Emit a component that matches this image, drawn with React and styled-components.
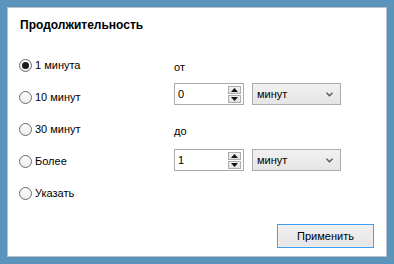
import React from "react";
import styled, { createGlobalStyle } from "styled-components";

const Global = createGlobalStyle`
  html, body { margin: 0; padding: 0; }
  body { width: 394px; height: 264px; overflow: hidden; background: #5b94bb; }
  #root { width: 394px; height: 264px; }
`;

const Frame = styled.div`
  box-sizing: border-box;
  width: 394px;
  height: 264px;
  background: #5b94bb;
  padding: 7px;
  font-family: Tahoma, "Liberation Sans", Arial, sans-serif;
  font-size: 11px;
  color: #000;
`;

const Panel = styled.div`
  box-sizing: border-box;
  height: 100%;
  background: #fff;
  border: 1px solid #b8c4cc;
  padding: 10px 12px 0 11px;
  display: flex;
  flex-direction: column;
`;

const Title = styled.div`
  font-weight: bold;
  font-size: 12px;
  height: 14px;
  line-height: 14px;
  margin-left: 1px;
`;

const Body = styled.div`
  display: flex;
  margin-top: 28px;
`;

const RadioCol = styled.div`
  display: flex;
  flex-direction: column;
  width: 155px;
`;

const RadioRow = styled.label`
  display: flex;
  align-items: center;
  height: 32px;
  margin-top: -11px;
  margin-bottom: 11px;
  gap: 3px;
`;

const RadioCircle = styled.span`
  box-sizing: border-box;
  width: 13px;
  height: 13px;
  border-radius: 50%;
  border: 1px solid #6a6a6a;
  background: linear-gradient(#fdfdfd, #ececec);
  display: flex;
  align-items: center;
  justify-content: center;
  &::after {
    content: "";
    width: 7px;
    height: 7px;
    border-radius: 50%;
    background: ${(p) => (p.$checked ? "#1a1a1a" : "transparent")};
  }
`;

const ControlsCol = styled.div`
  display: flex;
  flex-direction: column;
`;

const SmallLabel = styled.div`
  height: 14px;
  line-height: 14px;
  margin-top: ${(p) => p.$mt}px;
  margin-left: 0px;
`;

const ControlRow = styled.div`
  display: flex;
  gap: 8px;
  margin-top: ${(p) => p.$mt}px;
`;

const SpinBox = styled.div`
  box-sizing: border-box;
  width: 70px;
  height: 22px;
  border: 1px solid #ababab;
  display: flex;
  align-items: center;
  padding-left: 3px;
  justify-content: space-between;
`;

const SpinButtons = styled.div`
  display: flex;
  flex-direction: column;
  gap: 1px;
  margin-right: 2px;
`;

const SpinBtn = styled.div`
  box-sizing: border-box;
  width: 13px;
  height: 8px;
  border: 1px solid #acacac;
  background: linear-gradient(#f2f2f2, #e1e1e1);
  display: flex;
  align-items: center;
  justify-content: center;
`;

const Select = styled.div`
  box-sizing: border-box;
  width: 89px;
  height: 22px;
  border: 1px solid #acacac;
  background: linear-gradient(#f1f1f1, #e5e5e5);
  display: flex;
  align-items: center;
  justify-content: space-between;
  padding: 0 7px 0 4px;
`;

const Footer = styled.div`
  display: flex;
  justify-content: flex-end;
  margin-top: auto;
  padding-bottom: 8px;
`;

const Button = styled.button`
  box-sizing: border-box;
  width: 97px;
  height: 24px;
  border: 1px solid #3c9ef0;
  background: linear-gradient(#f0f0f0, #e5e5e5);
  font-family: inherit;
  font-size: 11px;
  color: #000;
  padding: 0;
  box-shadow: inset 0 0 0 1px #ffffff55;
`;

const Arrow = ({ up }) => (
  <svg width="7" height="4" viewBox="0 0 7 4">
    <path d={up ? "M0 4 L3.5 0 L7 4 Z" : "M0 0 L3.5 4 L7 0 Z"} fill="#111" />
  </svg>
);

const Chevron = () => (
  <svg width="7" height="5" viewBox="0 0 7 5">
    <path d="M0.5 0.8 L3.5 3.8 L6.5 0.8" stroke="#555" strokeWidth="1.4" fill="none" />
  </svg>
);

const Spin = ({ value }) => (
  <SpinBox>
    <span>{value}</span>
    <SpinButtons>
      <SpinBtn><Arrow up /></SpinBtn>
      <SpinBtn><Arrow /></SpinBtn>
    </SpinButtons>
  </SpinBox>
);

const Drop = () => (
  <Select>
    <span>минут</span>
    <Chevron />
  </Select>
);

const options = ["1 минута", "10 минут", "30 минут", "Более", "Указать"];

export default function App() {
  return (
    <>
      <Global />
      <Frame>
        <Panel>
          <Title>Продолжительность</Title>
          <Body>
            <RadioCol>
              {options.map((o, i) => (
                <RadioRow key={o}>
                  <RadioCircle $checked={i === 0} />
                  <span>{o}</span>
                </RadioRow>
              ))}
            </RadioCol>
            <ControlsCol>
              <SmallLabel $mt={0}>от</SmallLabel>
              <ControlRow $mt={9}>
                <Spin value="0" />
                <Drop />
              </ControlRow>
              <SmallLabel $mt={19}>до</SmallLabel>
              <ControlRow $mt={11}>
                <Spin value="1" />
                <Drop />
              </ControlRow>
            </ControlsCol>
          </Body>
          <Footer>
            <Button>Применить</Button>
          </Footer>
        </Panel>
      </Frame>
    </>
  );
}
